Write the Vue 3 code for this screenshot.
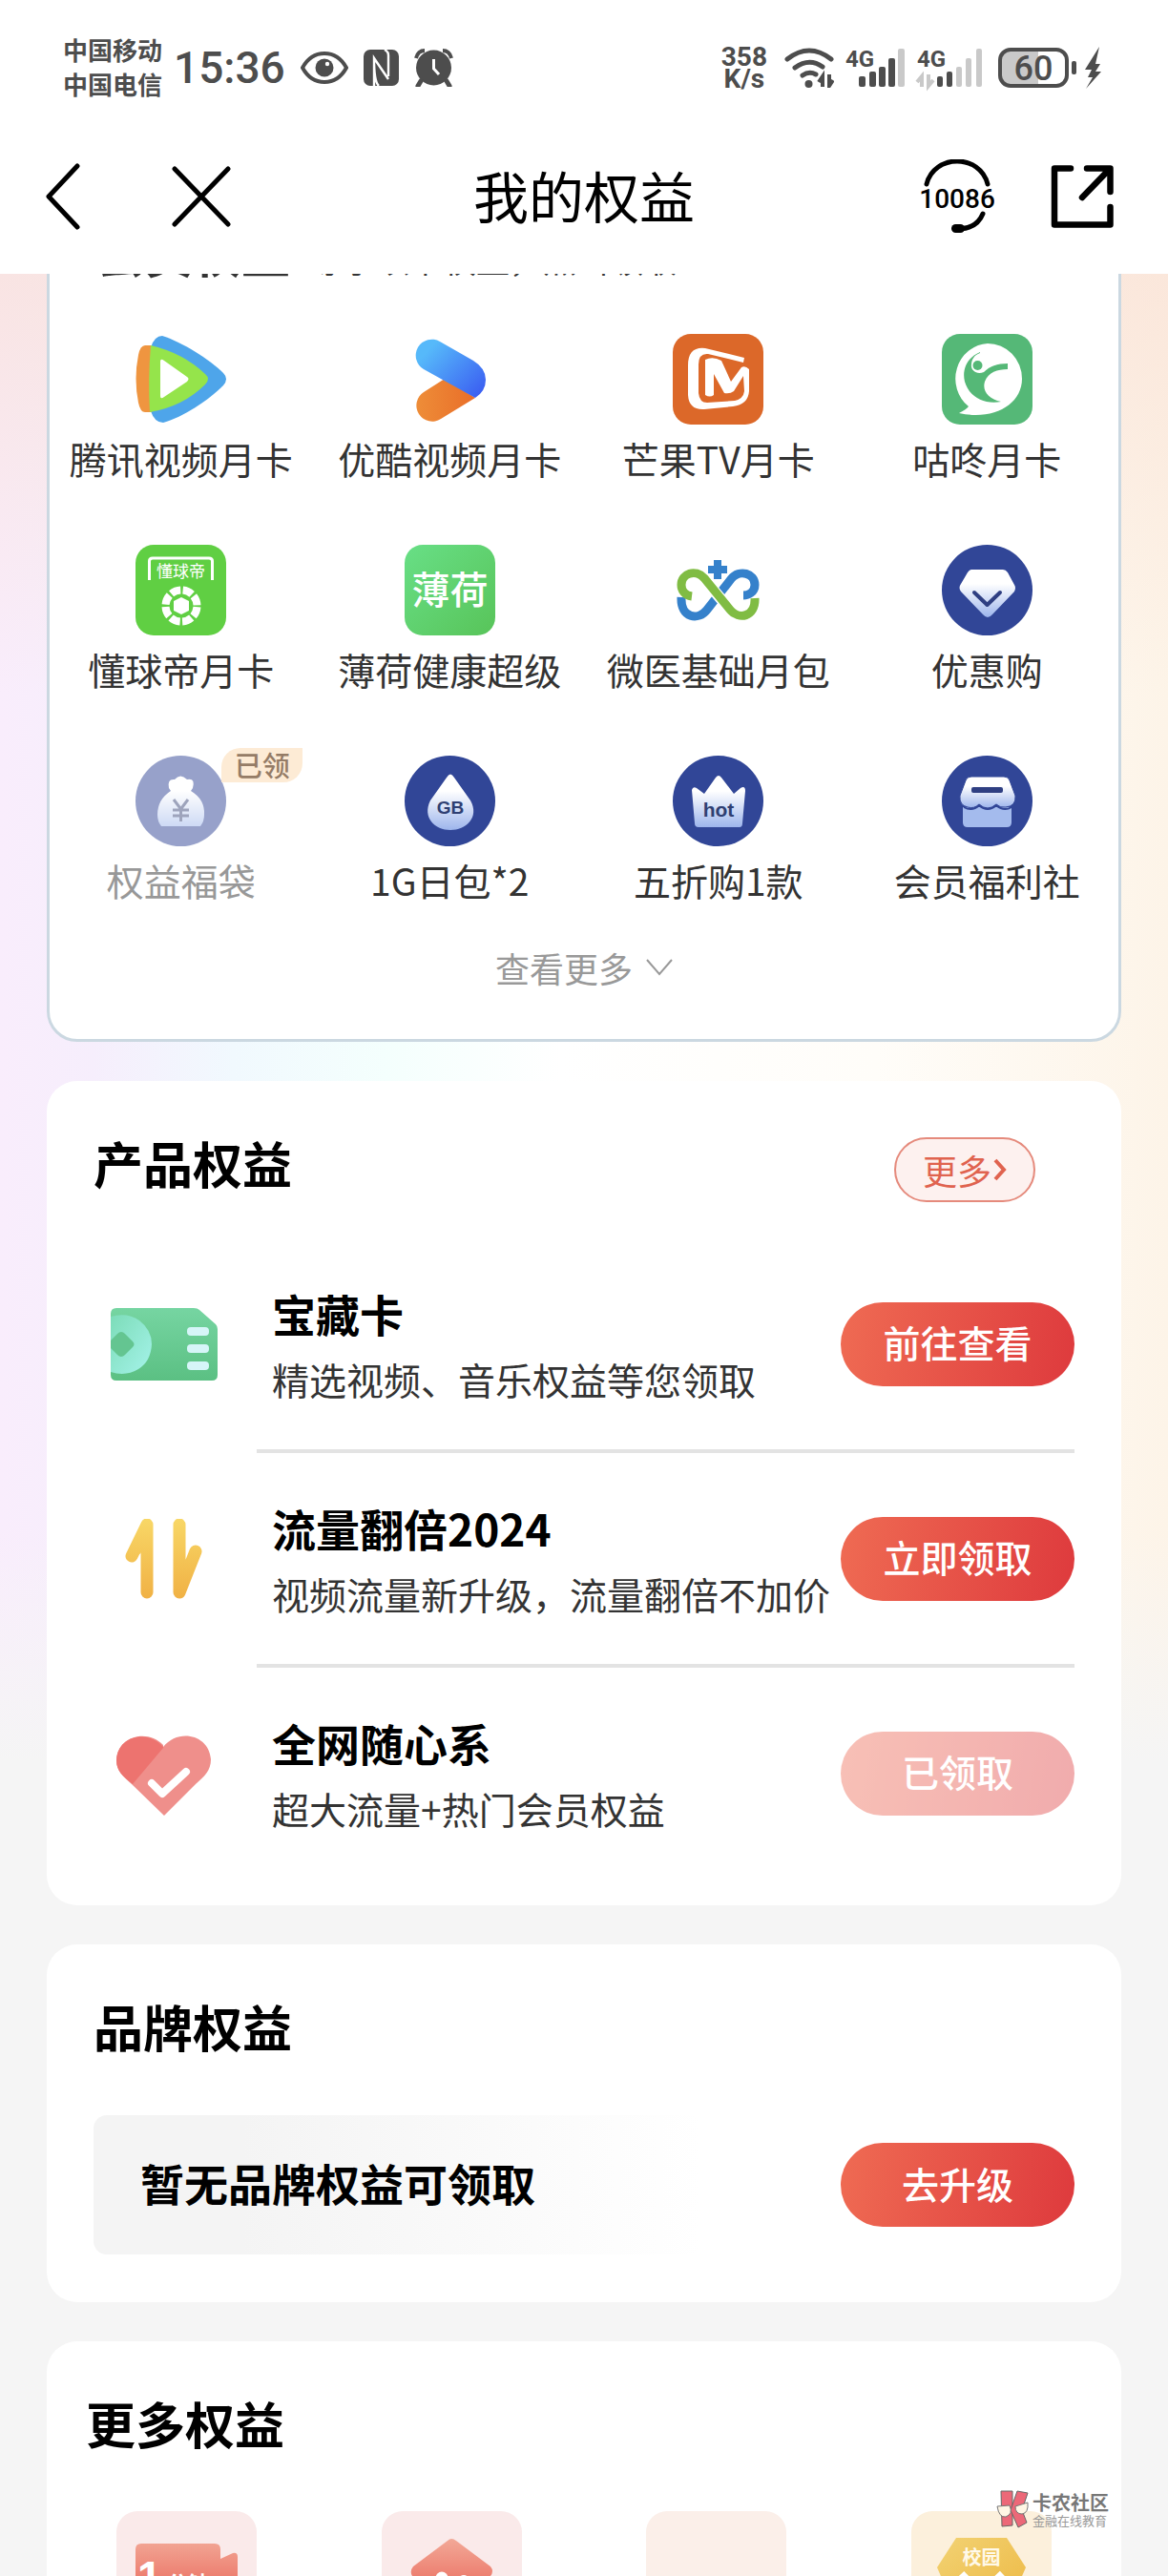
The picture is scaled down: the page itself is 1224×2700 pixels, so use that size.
<template>
  <div class="page">
    <header>
      <div class="status">
        <div class="carriers">
          <span>中国移动</span>
          <span>中国电信</span>
        </div>
        <span class="time">15:36</span>
        <svg class="eye" width="50" height="34" viewBox="0 0 50 34">
          <path d="M2 17C13-3 37-3 48 17C37 37 13 37 2 17Z" fill="none" stroke="#4d4d4d" stroke-width="4" />
          <circle cx="25" cy="17" r="9.5" fill="#4d4d4d" />
          <circle cx="28" cy="13" r="2.2" fill="#fff" />
        </svg>
        <svg class="nfc" width="37" height="38" viewBox="0 0 37 38">
          <rect width="37" height="38" rx="7" fill="#4d4d4d" />
          <path d="M11 38V9L26 31M26 28V6Q26 2 22 0M11 9Q11 34 16 38" fill="none" stroke="#fff" stroke-width="2.4" />
        </svg>
        <svg width="41" height="40" viewBox="0 0 41 40">
          <circle cx="20.500" cy="20" r="18.500" fill="#4d4d4d" />
          <path d="M2 10Q4 2 11 2M39 10Q37 2 30 2" fill="none" stroke="#4d4d4d" stroke-width="4" />
          <path d="M7 34L4 39M34 34L37 39" stroke="#4d4d4d" stroke-width="5" stroke-linecap="round" />
          <path d="M20.500 11V21L26 27" fill="none" stroke="#fff" stroke-width="3" />
        </svg>

        <div class="speed">
          <span>358</span>
          <span>K/s</span>
        </div>
        <svg class="wifi" width="52" height="42" viewBox="0 0 52 42">
          <g fill="none" stroke="#4d4d4d" stroke-width="5" stroke-linecap="round">
            <path d="M3 12Q26-6 49 12" />
            <path d="M11 21Q26 10 40 20" />
            <path d="M19 29Q26 24 33 28" />
          </g>
          <circle cx="25.500" cy="38" r="4" fill="#4d4d4d" />
          <path d="M36 36L40 30V41M47 28V40L51 34" fill="none" stroke="#4d4d4d" stroke-width="4" />
        </svg>
        <svg class="signal" width="62" height="42" viewBox="0 0 62 42">
          <text class="net" x="0" y="20">4G</text>
          <g fill="#4d4d4d">
            <rect x="14" y="30" width="7" height="11" rx="2" />
            <rect x="25" y="25" width="7" height="16" rx="2" />
            <rect x="35" y="20" width="7" height="21" rx="2" />
            <rect x="45" y="11" width="7" height="30" rx="2" />
          </g>
          <rect x="55" y="1" width="7" height="40" rx="2" fill="#c9c9c9" />
        </svg>
        <svg class="signal" width="70" height="42" viewBox="0 0 70 42">
          <text class="net" x="1" y="20">4G</text>
          <path d="M1 36L6 30V41M13 28V40L18 34" fill="none" stroke="#c9c9c9" stroke-width="4" />
          <g fill="#4d4d4d">
            <rect x="22" y="30" width="6" height="11" rx="2" />
            <rect x="32" y="25" width="6" height="16" rx="2" />
          </g>
          <g fill="#c9c9c9">
            <rect x="42" y="20" width="6" height="21" rx="2" />
            <rect x="52" y="11" width="6" height="30" rx="2" />
            <rect x="63" y="1" width="6" height="40" rx="2" />
          </g>
        </svg>
        <svg class="battery" width="109" height="44" viewBox="0 0 109 44">
          <path d="M14 3H42V41H14Q3 41 3 30V14Q3 3 14 3Z" fill="#c9c9c9" />
          <rect x="2" y="3" width="70" height="38" rx="11" fill="none" stroke="#4d4d4d" stroke-width="4" />
          <text x="37" y="35" text-anchor="middle">60</text>
          <rect x="77" y="15" width="5" height="14" rx="2" fill="#4d4d4d" />
          <path d="M106 0L91 24H98L94 32H99L92 44L108 26H102L107 18H102Z" fill="#4d4d4d" />
        </svg>
      </div>

      <nav>
        <div class="nav-left">
          <button aria-label="返回">
            <svg width="36" height="70" viewBox="0 0 36 70">
              <path d="M33 3L3 35L33 67" fill="none" stroke="#000" stroke-width="5" stroke-linecap="round" stroke-linejoin="round" />
            </svg>
          </button>
          <button aria-label="关闭">
            <svg width="62" height="64" viewBox="0 0 62 64">
              <path d="M3 3L59 61M59 3L3 61" fill="none" stroke="#000" stroke-width="5" stroke-linecap="round" />
            </svg>
          </button>
        </div>
        <h1>我的权益</h1>
        <div class="nav-right">
          <button aria-label="客服热线">
            <svg class="hotline" width="78" height="78" viewBox="0 0 78 78">
              <path d="M7 26C15-6 63-6 71 26" fill="none" stroke="#000" stroke-width="5" stroke-linecap="round" />
              <text x="39" y="51" text-anchor="middle">10086</text>
              <path d="M66 57Q60 72 42 73" fill="none" stroke="#000" stroke-width="5" stroke-linecap="round" />
              <rect x="33" y="68" width="14" height="9" rx="4.500" />
            </svg>
          </button>
          <button aria-label="分享">
            <svg width="66" height="66" viewBox="0 0 66 66">
              <path d="M21 3.500H4V62.500H62.500V44M38 3.500H62.500V28M61 5L33 34" fill="none" stroke="#000" stroke-width="6.500" stroke-linecap="round" stroke-linejoin="round" />
            </svg>
          </button>
        </div>
      </nav>
    </header>

    <main>
      <div class="content">
        <section class="card member">
          <div class="member-head">
            <h2>会员权益</h2>
            <span>尊享以下权益，点击领取</span>
          </div>
          <ul class="grid">
            <li v-for="item in members" :key="item.name" :class="{ done: item.done }">
              <a href="#">
                <svg class="icon" width="95" height="95" viewBox="0 0 95 95" v-html="item.art"></svg>
                <span>{{ item.name }}</span>
              </a>
              <em v-if="item.done">已领</em>
            </li>
          </ul>
          <button class="expand">
            查看更多
            <svg width="28" height="18" viewBox="0 0 28 18">
              <path d="M1 1L14 16L27 1" fill="none" stroke="#999" stroke-width="2" />
            </svg>
          </button>
        </section>

        <section class="card">
          <div class="card-head">
            <h2>产品权益</h2>
            <button class="more">
              更多
              <svg width="14" height="24" viewBox="0 0 14 24">
                <path d="M2 2L11 12L2 22" fill="none" stroke="#e0634f" stroke-width="4" />
              </svg>
            </button>
          </div>
          <ul class="products">
            <li v-for="item in products" :key="item.name">
              <svg class="product-icon" width="114" height="88" viewBox="0 0 114 88" v-html="item.art"></svg>
              <div class="product-body">
                <div class="product-text">
                  <h3>{{ item.name }}</h3>
                  <p>{{ item.desc }}</p>
                </div>
                <button class="pill" :disabled="item.done">{{ item.action }}</button>
              </div>
            </li>
          </ul>
        </section>

        <section class="card">
          <div class="card-head">
            <h2>品牌权益</h2>
          </div>
          <div class="brand">
            <h3>暂无品牌权益可领取</h3>
            <button class="pill">去升级</button>
          </div>
        </section>

        <section class="card extra">
          <h2>更多权益</h2>
          <ul class="tiles">
            <li v-for="tile in tiles" :key="tile.id">
              <a href="#" :class="['tile', tile.id]" :aria-label="tile.label">
                <svg width="147" height="147" viewBox="0 0 147 147" v-html="tile.art"></svg>
              </a>
            </li>
          </ul>
        </section>
      </div>
    </main>

    <div class="watermark">
      <svg width="34" height="40" viewBox="0 0 34 40">
        <g fill="#ec6878" stroke="#666" stroke-width="1">
          <path d="M5 1H17V37L6 38Z" />
          <path d="M22 1L33 3L27 21L32 34L23 39L15 21Z" />
        </g>
        <g fill="#fff6e4" stroke="#777" stroke-width="1">
          <path d="M1 17L14 16Q18 25 10 28Q3 29 1 17Z" />
          <path d="M20 17L33 13Q34 24 27 25Q20 25 20 17Z" />
        </g>
      </svg>
      <div>
        <strong>卡农社区</strong>
        <small>金融在线教育</small>
      </div>
    </div>
  </div>
</template>

<script setup>
const disc = '<circle cx="47.500" cy="47.500" r="47.500" fill="#314697"/>';

const fade = (id) =>
  `<defs><linearGradient id="${id}" x1="0" y1="0" x2="0" y2="1"><stop offset="0.3" stop-color="#fff"/><stop offset="1" stop-color="#9db5ec"/></linearGradient></defs>`;

// 12 member benefits, four per row
const members = [
  {
    name: '腾讯视频月卡',
    art: `<path d="M16 14Q20 2 28 2C48 8 78 27 92 41Q98 47 92 54C76 70 50 87 29 93Q20 93 16 81Z" fill="#4ea5ea"/>
      <path d="M17 12H10Q5 12 3 22Q-2 47 3 72Q5 82 10 82H17Z" fill="#ef9540"/>
      <path d="M16 12Q50 20 73 42Q79 47 73 53Q50 76 15 82Q13 47 16 12Z" fill="#95e44b"/>
      <path d="M26 29Q26 25 30 28L54 45Q57 47 54 50L30 66Q26 69 26 65Z" fill="#fff"/>`,
  },
  {
    name: '优酷视频月卡',
    art: `<defs><linearGradient id="yk" x1="0" y1="0" x2="1" y2="0.8"><stop offset="0.2" stop-color="#56b9fa"/><stop offset="1" stop-color="#3c62f2"/></linearGradient>
      <linearGradient id="yo" x1="0" y1="0" x2="1" y2="0"><stop offset="0" stop-color="#ee8d38"/><stop offset="1" stop-color="#e96e29"/></linearGradient></defs>
      <path d="M42 47L20 61A16.500 16.500 0 0 0 38 89L74 67Z" fill="url(#yo)"/>
      <path d="M37 8L72 28Q85 36 85 48Q85 60 74 67L20 37A16.500 16.500 0 0 1 37 8Z" fill="url(#yk)"/>`,
  },
  {
    name: '芒果TV月卡',
    art: `<rect width="95" height="95" rx="19" fill="#dc6829"/>
      <path d="M75 25L34 15Q16 13 16 33V64Q17 80 33 79L63 76Q79 74 80 60V37Q76 33 72 35L61 50L51 28Q42 23 34 27V64Q39 67 43 64V42L54 62Q60 63 64 60L74 44L75 60Q74 68 65 70L36 72Q28 72 27 62V32Q27 20 37 21L74 30Z" fill="#fff"/>`,
  },
  {
    name: '咕咚月卡',
    art: `<rect width="95" height="95" rx="19" fill="#55b877"/>
      <path d="M48 10A36 37 0 0 1 84 47C84 74 54 91 18 83Q26 79 28 76A36 37 0 0 1 48 10Z" fill="#fff"/>
      <path d="M40 19C26 25 21 38 24 50C29 67 45 74 62 71C49 68 42 60 45 50C49 40 58 37 69 37V31C58 31 50 34 44 40C36 43 30 38 31 32C31 27 34 22 40 20Z" fill="#55b877"/>
      <circle cx="37.500" cy="33" r="5" fill="#55b877"/>`,
  },
  {
    name: '懂球帝月卡',
    art: `<rect width="95" height="95" rx="19" fill="#60cf43"/>
      <path d="M14.500 37V17Q14.500 14 18 14H77Q80.500 14 80.500 17V37" fill="none" stroke="#fff" stroke-width="3"/>
      <text x="47.500" y="34" text-anchor="middle" font-size="17" fill="#fff">懂球帝</text>
      <circle cx="48" cy="64" r="16.500" fill="none" stroke="#fff" stroke-width="8" stroke-dasharray="10.460 2.500" stroke-dashoffset="-1.200"/>
      <path d="M48 55L56 59V69L48 73L40 69V59Z" fill="#fff"/>`,
  },
  {
    name: '薄荷健康超级',
    art: `<defs><linearGradient id="bh" x1="0" y1="0" x2="1" y2="1"><stop offset="0" stop-color="#68df86"/><stop offset="1" stop-color="#58c459"/></linearGradient></defs>
      <rect width="95" height="95" rx="19" fill="url(#bh)"/>
      <text x="47.500" y="62" text-anchor="middle" font-size="40" font-weight="500" fill="#fff">薄荷</text>`,
  },
  {
    name: '微医基础月包',
    art: `<g fill="none" stroke-width="9">
      <path d="M9 55C8 77 27 80 36 68L61 36C70 25 86 30 86 42C86 50 79 53 74 53" stroke="#3581cb"/>
      <path d="M33 36L60 68" stroke="#fff" stroke-width="12"/>
      <path d="M20 54C12 53 9 47 9 42C9 30 24 25 33 35L60 68C69 79 87 76 86 56" stroke="#80bc43"/></g>
      <path d="M43 16H51V22H57V30H51V36H43V30H37V22H43Z" fill="#3581cb"/>`,
  },
  {
    name: '优惠购',
    art: `${disc}${fade('g1')}
      <path d="M31 26H64Q67 26 69 29L76 42Q78 45 76 49L53 73Q48 79 43 73L20 49Q17 45 20 41L27 29Q29 26 31 26Z" fill="url(#g1)"/>
      <path d="M34 50L47.500 63L61 50" fill="none" stroke="#2f3f82" stroke-width="4" stroke-linecap="round" stroke-linejoin="round"/>`,
  },
  {
    name: '权益福袋',
    done: true,
    art: `${disc}${fade('g2')}
      <path d="M35 34Q33 24 41 25Q47 18 54 25Q63 23 60 34L58 37Q73 46 72 62Q72 69 68 74H27Q23 69 23 62Q23 46 37 37Z" fill="url(#g2)"/>
      <path d="M40 46L47.500 56L55 46M47.500 56V69M39 57H56M39 63H56" fill="none" stroke="#3f4c7c" stroke-width="3"/>`,
  },
  {
    name: '1G日包*2',
    art: `${disc}${fade('g3')}
      <path d="M44 23Q48 16 52 23L69 47C79 65 64 78 48 78C32 78 18 65 27 47Z" fill="url(#g3)"/>
      <text x="48" y="61" text-anchor="middle" font-family="Liberation Sans" font-size="19" font-weight="700" fill="#2f3f72">GB</text>`,
  },
  {
    name: '五折购1款',
    art: `${disc}${fade('g4')}
      <path d="M20 36Q21 32 25 34L33 40L45 23Q48 19 51 23L64 40L71 34Q76 31 76 37L73 71Q73 75 70 75H27Q23 75 23 71Z" fill="url(#g4)"/>
      <text x="48" y="64" text-anchor="middle" font-family="Liberation Sans" font-size="21" font-weight="700" fill="#2f3f72">hot</text>`,
  },
  {
    name: '会员福利社',
    art: `${disc}${fade('g5')}
      <path d="M22 54H73V70Q73 75 68 75H27Q22 75 22 70Z" fill="#a4bbed"/>
      <path d="M31 22H65Q70 22 71 26L77 42Q78 53 67 54Q61 55 57 51Q48 59 39 51Q34 56 27 54Q18 52 19 42L25 26Q26 22 31 22Z" fill="url(#g5)" stroke="#314697" stroke-width="1"/>
      <path d="M23 54Q32 59 39 52Q48 60 57 52Q65 59 73 54" fill="none" stroke="#314697" stroke-width="2"/>
      <rect x="31" y="33" width="33" height="6" rx="2" fill="#2f3f82"/>`,
  },
];

const products = [
  {
    name: '宝藏卡',
    desc: '精选视频、音乐权益等您领取',
    action: '前往查看',
    art: `<defs><linearGradient id="p1" x1="0" y1="0" x2="0" y2="1"><stop offset="0" stop-color="#76d5a2"/><stop offset="1" stop-color="#5bc083"/></linearGradient>
      <linearGradient id="p1b" x1="0" y1="0" x2="1" y2="1"><stop offset="0" stop-color="#7cdcb8"/><stop offset="1" stop-color="#a5f3ea"/></linearGradient></defs>
      <path d="M7 4H88Q92 4 94 6L111 21Q113 23 113 26V74Q113 80 107 80H7Q1 80 1 74V10Q1 4 7 4Z" fill="url(#p1)"/>
      <path d="M1 13Q18 8 31 17Q44 27 44 42Q43 60 30 68Q17 76 1 71Z" fill="url(#p1b)"/>
      <path d="M1 38L8 31Q12 27 16 31L24 39Q27 42 24 45L16 53Q12 57 8 53L1 46Z" fill="#64c591"/>
      <g fill="#d6f5f8"><rect x="81" y="24" width="23" height="9" rx="4"/><rect x="81" y="42" width="23" height="9" rx="4"/><rect x="81" y="60" width="23" height="9" rx="4"/></g>`,
  },
  {
    name: '流量翻倍2024',
    desc: '视频流量新升级，流量翻倍不加价',
    action: '立即领取',
    art: `<defs><linearGradient id="p2" x1="0" y1="0" x2="0" y2="88" gradientUnits="userSpaceOnUse"><stop offset="0" stop-color="#f8d766"/><stop offset="1" stop-color="#f0af43"/></linearGradient></defs>
      <g fill="none" stroke="url(#p2)" stroke-width="13" stroke-linecap="round" stroke-linejoin="round"><path d="M39 77V6L23 39"/><path d="M73 6V77L90 34"/></g>
      <path d="M39 6L30 38L39 30ZM73 77L86 44L73 54Z" fill="url(#p2)"/>`,
  },
  {
    name: '全网随心系',
    desc: '超大流量+热门会员权益',
    action: '已领取',
    done: true,
    art: `<path d="M56 14C40-3 8 4 7 30C7 41 14 47 23 55L57 88L90 55C99 47 106 41 106 29C104 3 72-4 56 16Z" fill="#ef8f8b"/>
      <path d="M56 16C40-3 8 4 7 30C7 41 14 47 24 55L56 17Z" fill="#ed736f"/>
      <path d="M44 54L55 65L80 42" fill="none" stroke="#fff" stroke-width="8" stroke-linecap="round" stroke-linejoin="round"/>`,
  },
];

const red = (id) =>
  `<defs><linearGradient id="${id}" x1="0" y1="30" x2="0" y2="90" gradientUnits="userSpaceOnUse"><stop offset="0" stop-color="#f2a796"/><stop offset="1" stop-color="#ea6a5c"/></linearGradient></defs>`;

const tiles = [
  {
    id: 'video',
    label: '视频',
    art: `${red('t1')}<path d="M26 34H103Q109 34 109 40V50L122 44Q127 43 127 48V105H26Q20 105 20 99V40Q20 34 26 34Z" fill="url(#t1)"/>
      <text x="22" y="85" font-family="Liberation Sans" font-size="46" font-weight="700" fill="#fff">1</text>
      <text x="53" y="84" font-size="22" font-weight="700" fill="#fff">分钟</text>`,
  },
  {
    id: 'home',
    label: '家庭',
    art: `${red('t2')}<path d="M69 31Q73 27 78 31L114 58Q118 63 114 68L105 78V110H42V78L32 68Q29 63 33 58Z" fill="url(#t2)"/>
      <circle cx="63" cy="70" r="6.500" fill="#fff"/><circle cx="86" cy="73" r="6" fill="#fff"/>`,
  },
  { id: 'blank', label: '权益', art: '' },
  {
    id: 'campus',
    label: '校园',
    art: `<defs><linearGradient id="t4" x1="0" y1="0" x2="1" y2="1"><stop offset="0" stop-color="#f2d273"/><stop offset="1" stop-color="#edb843"/></linearGradient></defs>
      <path d="M47 28H100L120 59L100 105H47L27 59Z" fill="url(#t4)"/>
      <text x="73.500" y="56" text-anchor="middle" font-size="20" font-weight="700" fill="#fff9ea">校园</text>
      <path d="M52 66L73 88L96 66" fill="none" stroke="#fff" stroke-width="9"/>`,
  },
];
</script>

<style>
html,
body {
  margin: 0;
  background: #f5f5f5;
}
</style>

<style scoped>
.page {
  position: relative;
  display: flex;
  flex-direction: column;
  height: 100vh;
  overflow: hidden;
  color: #333;
  font-family: 'Noto Sans CJK SC', sans-serif;
}

h1,
h2,
h3,
p,
ul {
  margin: 0;
  padding: 0;
}

ul {
  list-style: none;
}

svg {
  display: block;
  flex: none;
}

button {
  padding: 0;
  border: 0;
  background: none;
  color: inherit;
  font-family: inherit;
}

a {
  color: inherit;
  text-decoration: none;
}

/* header */
header {
  flex: none;
  background: #fff;
}

.status {
  display: flex;
  align-items: center;
  height: 142px;
  padding: 0 69px 0 66px;
  color: #4d4d4d;
}

.carriers {
  display: flex;
  flex-direction: column;
  padding-bottom: 2px;
  font-size: 26px;
  font-weight: 700;
  line-height: 36px;
}

.time {
  margin: 0 16px 0 12px;
  font-family: Roboto, sans-serif;
  font-size: 46px;
  font-weight: 500;
}

.eye,
.nfc {
  margin-right: 16px;
}

.speed {
  display: flex;
  flex-direction: column;
  align-items: center;
  margin-left: auto;
  font-family: Roboto, sans-serif;
  font-size: 28px;
  font-weight: 700;
  line-height: 23px;
}

.wifi {
  margin-left: 18px;
}

.signal {
  margin-left: 12px;
  overflow: visible;
}

.net {
  fill: #4d4d4d;
  font-family: Roboto, sans-serif;
  font-size: 24px;
  font-weight: 700;
}

.battery {
  margin-left: 16px;
}

.battery text {
  fill: #4d4d4d;
  font-family: Roboto, sans-serif;
  font-size: 36px;
  font-weight: 500;
}

nav {
  display: grid;
  grid-template-columns: 1fr auto 1fr;
  align-items: center;
  height: 127px;
  padding: 0 48px 18px;
  color: #000;
}

.nav-left,
.nav-right {
  display: flex;
  align-items: center;
}

.nav-left {
  gap: 96px;
}

.nav-right {
  justify-content: flex-end;
  gap: 59px;
  padding-right: 9px;
}

.hotline text {
  font-family: Roboto, sans-serif;
  font-size: 28px;
  font-weight: 500;
}

h1 {
  padding-bottom: 4px;
  font-size: 58px;
  font-weight: 400;
  line-height: 80px;
}

/* scrolled body */
main {
  flex: 1;
  min-height: 0;
  overflow: hidden;
  background:
    linear-gradient(transparent 1320px, #f5f5f5 1560px),
    linear-gradient(rgba(249, 222, 210, 0.6), transparent 440px),
    linear-gradient(90deg, #f9edfc, #f6eefc 8%, #f1f9fe 20%, #f4fffd 33%, #fff 48%, #fffdf9 75%, #fdf4e8);
}

.content {
  display: flex;
  flex-direction: column;
  gap: 41px;
  margin-top: -97px;
  padding: 0 49px;
}

.card {
  padding: 50px 49px;
  border-radius: 32px;
  background: #fff;
}

h2 {
  color: #000;
  font-size: 52px;
  font-weight: 700;
  line-height: 72px;
}

h3 {
  color: #000;
  font-size: 46px;
  font-weight: 700;
  line-height: 62px;
}

.member {
  padding: 35px 0 55px;
  border: 3px solid #cbd8e1;
}

.member-head {
  display: flex;
  align-items: baseline;
  gap: 20px;
  padding: 0 48px;
  font-size: 35px;
}

.member-head h2 {
  color: #333;
  font-size: 51px;
}

.grid {
  display: grid;
  grid-template-columns: repeat(4, 1fr);
  row-gap: 71px;
  margin: 50px -3px 0;
}

.grid li {
  position: relative;
}

.grid a {
  display: flex;
  flex-direction: column;
  align-items: center;
  gap: 15px;
  font-size: 39px;
  line-height: 40px;
  white-space: nowrap;
}

.grid .done a {
  opacity: 0.5;
}

.grid em {
  position: absolute;
  top: -8px;
  left: calc(50% + 42px);
  padding: 0 13px 2px 14px;
  border-radius: 20px 0 20px 0;
  background: #fdebd5;
  color: #957c66;
  font-size: 29px;
  font-style: normal;
  font-weight: 500;
  line-height: 34px;
}

.expand {
  display: flex;
  align-items: center;
  gap: 14px;
  margin: 52px auto 0;
  color: #999;
  font-size: 36px;
  line-height: 40px;
}

.card-head {
  display: flex;
  align-items: flex-start;
  justify-content: space-between;
}

.more {
  display: flex;
  align-items: center;
  justify-content: center;
  gap: 2px;
  box-sizing: border-box;
  width: 148px;
  height: 68px;
  margin: 9px 41px 0 0;
  border: 2px solid #e58a7c;
  border-radius: 34px;
  background: #fdf1ef;
  color: #e0634f;
  font-size: 36px;
  line-height: 60px;
}

.products {
  margin: 38px 0 -22px;
}

.products li {
  display: flex;
  align-items: center;
}

.product-icon {
  margin: 0 40px 0 17px;
}

.product-body {
  display: flex;
  flex: 1;
  align-items: center;
  justify-content: space-between;
  height: 221px;
  padding-left: 16px;
  border-bottom: 4px solid #e3e3e3;
}

.products li:last-child .product-body {
  border-bottom: 0;
}

.product-text {
  display: flex;
  flex-direction: column;
  gap: 15px;
  padding-bottom: 4px;
}

.product-text p {
  font-size: 39px;
  line-height: 46px;
  white-space: nowrap;
}

.pill {
  flex: none;
  width: 245px;
  height: 88px;
  padding-bottom: 5px;
  border-radius: 44px;
  background: linear-gradient(100deg, #ef6b53, #de3a3d);
  color: #fff;
  font-size: 39px;
  font-weight: 500;
}

.pill:disabled {
  opacity: 0.42;
}

.brand {
  display: flex;
  align-items: center;
  justify-content: space-between;
  height: 146px;
  margin-top: 57px;
  padding-left: 49px;
  border-radius: 14px;
  background: linear-gradient(90deg, #f4f4f4 15%, #fff 62%);
}

.brand h3 {
  padding-bottom: 6px;
}

.extra {
  padding: 50px 8px;
}

.extra h2 {
  padding-left: 33px;
}

.tiles {
  display: grid;
  grid-template-columns: repeat(4, 1fr);
  justify-items: center;
  margin-top: 56px;
}

.tile {
  display: block;
  border-radius: 22px;
  background: #faeaea;
}

.blank {
  background: #fbefe9;
}

.campus {
  background: #fcf0dc;
}

.watermark {
  position: absolute;
  right: 62px;
  bottom: 50px;
  display: flex;
  align-items: center;
  gap: 4px;
  color: #777;
}

.watermark strong,
.watermark small {
  display: block;
}

.watermark strong {
  font-size: 20px;
  line-height: 22px;
}

.watermark small {
  color: #999;
  font-size: 13px;
  line-height: 15px;
}
</style>
